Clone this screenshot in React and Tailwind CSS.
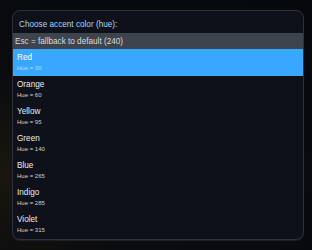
import React from "react";

const items = [
  { name: "Red", hue: 30 },
  { name: "Orange", hue: 60 },
  { name: "Yellow", hue: 95 },
  { name: "Green", hue: 140 },
  { name: "Blue", hue: 265 },
  { name: "Indigo", hue: 285 },
  { name: "Violet", hue: 315 },
];

export default function App() {
  return (
    <div
      className="w-[312px] h-[250px] pt-[10px] pl-[12px] bg-[radial-gradient(ellipse_at_0%_70%,#19160f_0%,#0b0c0f_40%,#07080b_100%)]"
      style={{ fontFamily: '"Liberation Sans", Arial, sans-serif' }}
    >
      <div className="w-[292px] h-[230px] rounded-[8px] border border-[#2d323c] bg-[#0e1119] overflow-hidden flex flex-col shadow-[0_1px_0_#1c1f26]">
        <div className="h-[22px] shrink-0 pt-[9px] pl-[6px] text-[8.2px] leading-[10px] text-[#a6d6ff]">
          Choose accent color (hue):
        </div>
        <div className="h-[16px] shrink-0 pt-[4px] pl-[2px] bg-[#3e444d] text-[8.2px] leading-[10px] text-[#dadcdf]">
          Esc = fallback to default (240)
        </div>
        {items.map((it, i) => (
          <div
            key={it.name}
            className={
              i === 0
                ? "h-[27px] shrink-0 pt-[4px] pl-[4px] bg-[#38a8ff]"
                : "h-[27px] shrink-0 pt-[4px] pl-[4px]"
            }
          >
            <div
              className={
                i === 0
                  ? "text-[8.2px] leading-[10px] text-white"
                  : "text-[8.2px] leading-[10px] text-[#ececec]"
              }
            >
              {it.name}
            </div>
            <div
              className={
                i === 0
                  ? "mt-[1px] text-[6px] leading-[8px] text-[#b4ddff]"
                  : "mt-[1px] text-[6px] leading-[8px] text-[#d0d1d3]"
              }
            >
              Hue = {it.hue}
            </div>
          </div>
        ))}
      </div>
    </div>
  );
}
